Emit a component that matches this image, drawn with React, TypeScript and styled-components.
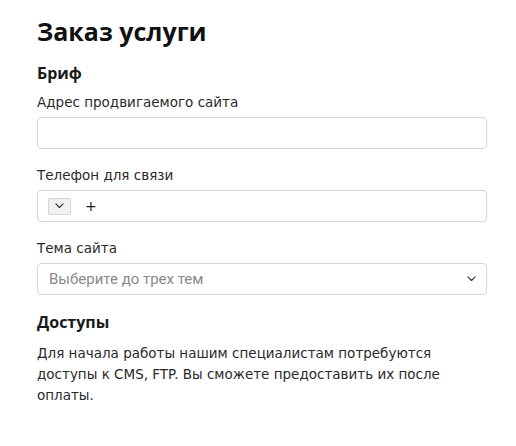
import React from 'react';
import styled, { createGlobalStyle } from 'styled-components';

const GlobalStyle = createGlobalStyle`
  body {
    margin: 0;
    background: #fff;
    font-family: "DejaVu Sans", "Open Sans", sans-serif;
    color: #1a1a1a;
  }
`;

const Page = styled.div`
  width: 450px;
  padding: 14px 0 0 37px;
`;

const Title = styled.h1`
  margin: 0;
  font-family: "Open Sans", sans-serif;
  font-size: 25px;
  line-height: 34px;
  font-weight: 700;
  color: #111;
`;

const Section = styled.section<{ $top: number }>`
  margin-top: ${p => p.$top}px;
`;

const SectionTitle = styled.h2`
  margin: 0;
  font-family: "Open Sans", sans-serif;
  font-size: 16px;
  line-height: 22px;
  font-weight: 700;
  color: #1a1a1a;
`;

const Form = styled.div`
  display: flex;
  flex-direction: column;
  gap: 17px;
  margin-top: 9px;
`;

const Field = styled.div`
  display: flex;
  flex-direction: column;
  gap: 5px;
`;

const Label = styled.label`
  font-size: 13.5px;
  line-height: 19px;
  color: #2a2a2a;
`;

const Box = styled.div`
  box-sizing: border-box;
  height: 32px;
  border: 1px solid #d6d6d6;
  border-radius: 4px;
  display: flex;
  align-items: center;
  padding: 0 10px;
  background: #fff;
`;

const CountryButton = styled.div`
  box-sizing: border-box;
  width: 23px;
  height: 17px;
  border: 1px solid #d4d4d4;
  background: #f0f0f0;
  border-radius: 2px;
  display: flex;
  align-items: center;
  justify-content: center;
`;

const Plus = styled.span`
  margin-left: 14px;
  font-size: 14px;
  color: #222;
`;

const Placeholder = styled.span`
  flex: 1;
  font-family: Roboto, "Liberation Sans", sans-serif;
  font-size: 15px;
  color: #8a8a8a;
  padding-left: 1px;
`;

const Text = styled.p`
  margin: 10px 0 0;
  font-size: 13.5px;
  line-height: 21px;
  color: #2a2a2a;
`;

const Chevron = ({ size = 10 }: { size?: number }) => (
  <svg width={size} height={size * 0.6} viewBox="0 0 10 6" fill="none">
    <path d="M1 1l4 4 4-4" stroke="#333" strokeWidth="1.3" strokeLinecap="round" strokeLinejoin="round" />
  </svg>
);

export default function App() {
  return (
    <>
      <GlobalStyle />
      <Page>
        <Title>Заказ услуги</Title>
        <Section $top={14}>
          <SectionTitle>Бриф</SectionTitle>
          <Form>
            <Field>
              <Label>Адрес продвигаемого сайта</Label>
              <Box />
            </Field>
            <Field>
              <Label>Телефон для связи</Label>
              <Box>
                <CountryButton>
                  <Chevron size={9} />
                </CountryButton>
                <Plus>+</Plus>
              </Box>
            </Field>
            <Field>
              <Label>Тема сайта</Label>
              <Box>
                <Placeholder>Выберите до трех тем</Placeholder>
                <Chevron size={9} />
              </Box>
            </Field>
          </Form>
        </Section>
        <Section $top={16}>
          <SectionTitle>Доступы</SectionTitle>
          <Text>
            Для начала работы нашим специалистам потребуются доступы к CMS, FTP. Вы сможете предоставить их после
            оплаты.
          </Text>
        </Section>
      </Page>
    </>
  );
}
